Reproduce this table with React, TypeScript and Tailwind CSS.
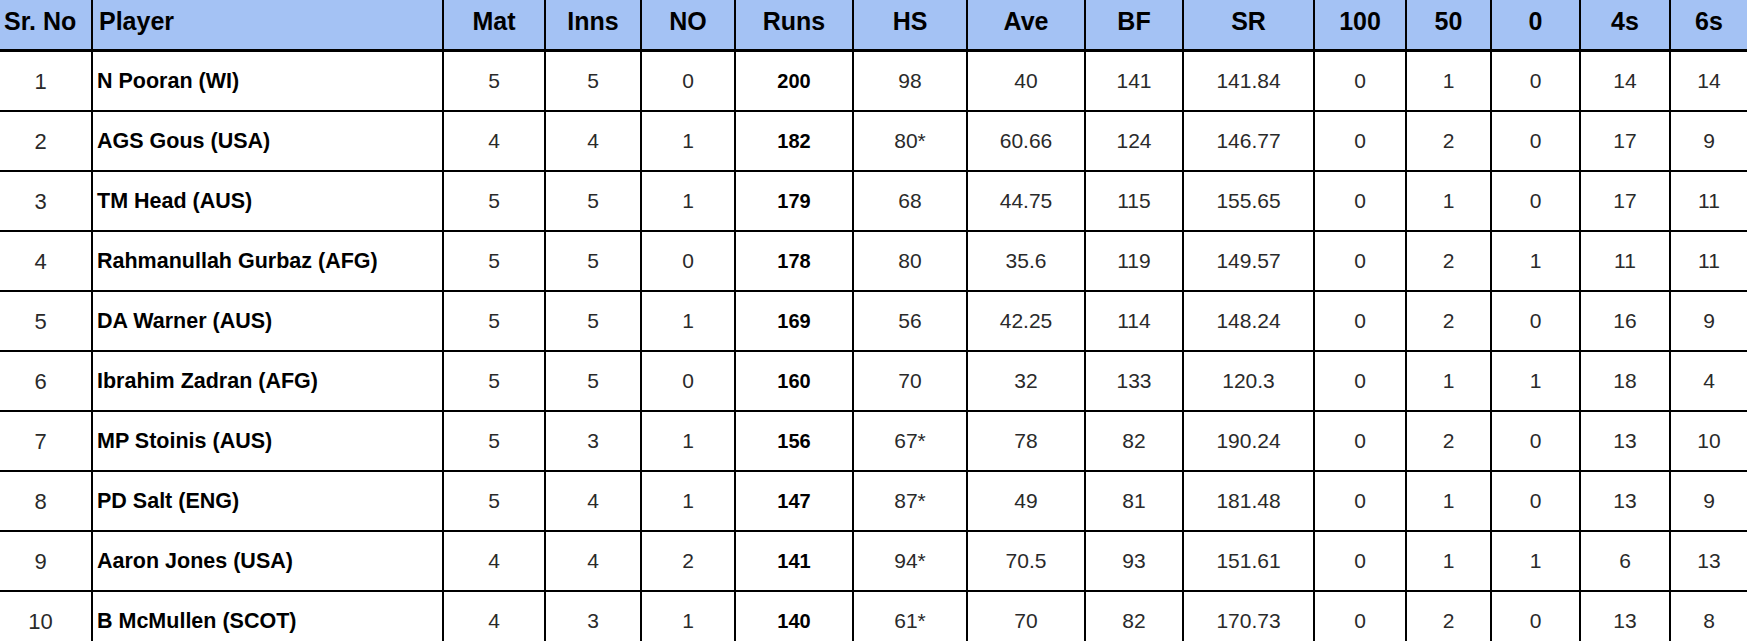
const headers = ["Sr. No", "Player", "Mat", "Inns", "NO", "Runs", "HS", "Ave", "BF", "SR", "100", "50", "0", "4s", "6s"];

const rows: (string | number)[][] = [
  [1, "N Pooran (WI)", 5, 5, 0, 200, "98", "40", 141, "141.84", 0, 1, 0, 14, 14],
  [2, "AGS Gous (USA)", 4, 4, 1, 182, "80*", "60.66", 124, "146.77", 0, 2, 0, 17, 9],
  [3, "TM Head (AUS)", 5, 5, 1, 179, "68", "44.75", 115, "155.65", 0, 1, 0, 17, 11],
  [4, "Rahmanullah Gurbaz (AFG)", 5, 5, 0, 178, "80", "35.6", 119, "149.57", 0, 2, 1, 11, 11],
  [5, "DA Warner (AUS)", 5, 5, 1, 169, "56", "42.25", 114, "148.24", 0, 2, 0, 16, 9],
  [6, "Ibrahim Zadran (AFG)", 5, 5, 0, 160, "70", "32", 133, "120.3", 0, 1, 1, 18, 4],
  [7, "MP Stoinis (AUS)", 5, 3, 1, 156, "67*", "78", 82, "190.24", 0, 2, 0, 13, 10],
  [8, "PD Salt (ENG)", 5, 4, 1, 147, "87*", "49", 81, "181.48", 0, 1, 0, 13, 9],
  [9, "Aaron Jones (USA)", 4, 4, 2, 141, "94*", "70.5", 93, "151.61", 0, 1, 1, 6, 13],
  [10, "B McMullen (SCOT)", 4, 3, 1, 140, "61*", "70", 82, "170.73", 0, 2, 0, 13, 8],
];

const grid =
  "grid grid-cols-[93px_351px_102px_96px_94px_118px_114px_118px_98px_131px_92px_85px_89px_90px_76px]";

export default function App() {
  return (
    <div className="w-[1747px] h-[641px] overflow-hidden bg-white font-['Liberation_Sans',Arial,sans-serif]">
      {/* Header */}
      <div className={`${grid} h-[52px] bg-[#a4c2f4]`}>
        {headers.map((h, i) => (
          <div
            key={h}
            className={`flex items-center pb-[6px] text-[25px] font-bold text-black border-b-[3px] border-black ${
              i < headers.length - 1 ? "border-r-2" : ""
            } ${i === 1 ? "justify-start pl-[6px]" : i === 0 ? "justify-start pl-[4px]" : "justify-center"}`}
          >
            {h}
          </div>
        ))}
      </div>

      {/* Body rows */}
      {rows.map((r) => (
        <div key={r[0]} className={`${grid} h-[60px]`}>
          {r.map((v, i) => (
            <div
              key={i}
              className={`flex items-center border-b-2 border-black ${i < r.length - 1 ? "border-r-2" : ""} ${
                i === 1
                  ? "justify-start pl-[4px] text-[21.5px] font-bold text-black"
                  : i === 5
                  ? "justify-center text-[20px] font-bold text-black"
                  : i === 0
                  ? "justify-center pr-[10px] text-[22px] text-[#2a2a2a]"
                  : "justify-center text-[21px] text-[#2a2a2a]"
              }`}
            >
              {v}
            </div>
          ))}
        </div>
      ))}
    </div>
  );
}
